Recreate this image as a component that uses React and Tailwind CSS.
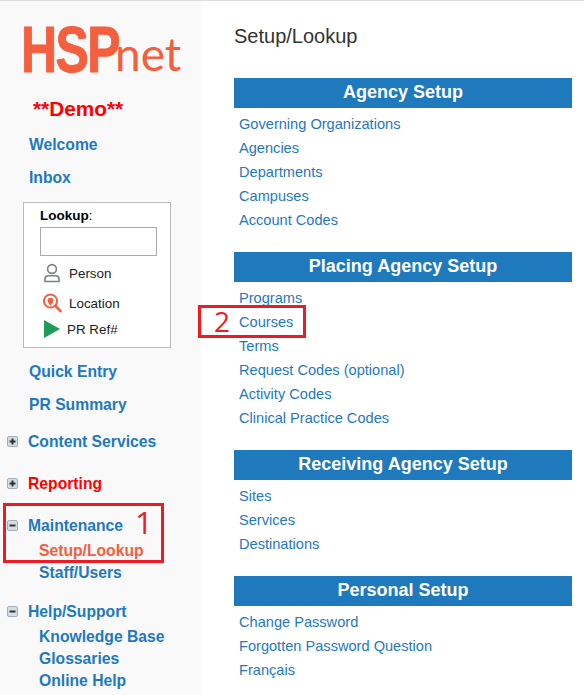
import React from "react";

const sections = [
  {
    title: "Agency Setup",
    links: ["Governing Organizations", "Agencies", "Departments", "Campuses", "Account Codes"],
  },
  {
    title: "Placing Agency Setup",
    links: ["Programs", "Courses", "Terms", "Request Codes (optional)", "Activity Codes", "Clinical Practice Codes"],
  },
  {
    title: "Receiving Agency Setup",
    links: ["Sites", "Services", "Destinations"],
  },
  {
    title: "Personal Setup",
    links: ["Change Password", "Forgotten Password Question", "Français"],
  },
];

const TreeIcon = ({ open }) => (
  <svg width="11" height="11" viewBox="0 0 11 11" className="shrink-0">
    <rect x="0.5" y="0.5" width="10" height="10" rx="1.5" fill="#d5dde2" stroke="#9fb0bb" />
    <rect x="2.5" y="4.5" width="6" height="2" fill="#333" />
    {!open && <rect x="4.5" y="2.5" width="2" height="6" fill="#333" />}
  </svg>
);

const NavLink = ({ children, className = "" }) => (
  <div className={`flex items-center pt-[2px] font-bold text-[#1f79bd] ${className}`}>{children}</div>
);

const TreeHead = ({ open, children, className = "" }) => (
  <div className={`flex h-[22px] items-center gap-[10px] pl-[7px] text-[15.7px] font-bold ${className}`}>
    <TreeIcon open={open} />
    <span className="pt-[2px]">{children}</span>
  </div>
);

const Sidebar = () => (
  <div className="relative w-[201px] shrink-0 bg-[#f9f9f9]">
    {/* logo */}
    <div className="flex h-[71px] items-end pl-[21px] text-[#f45f3f]">
      <span className="inline-block w-[94px] origin-left scale-x-[0.78] text-[64px] leading-[44px] font-bold tracking-[-2px] [-webkit-text-stroke:1px_#f45f3f] [font-family:'Liberation_Sans',sans-serif]">HSP</span>
      <span className="text-[46px] leading-[36px] [font-family:'Lato',sans-serif]">net</span>
    </div>
    <div className="mt-[23px] h-[28px] pl-[33px] text-[20.8px] leading-[28px] font-bold text-[#ff0000]">**Demo**</div>
    <NavLink className="mt-[10px] h-[22px] pl-[29px] text-[15.7px]">Welcome</NavLink>
    <NavLink className="mt-[11px] h-[22px] pl-[29px] text-[15.7px]">Inbox</NavLink>

    <div className="mx-[23px] mt-[14px] h-[146px] w-[148px] border border-[#bbbbbb] bg-white pl-[16px]">
      <div className="pt-[5px] text-[13.5px] leading-[16px] text-black">
        <span className="font-bold">Lookup</span>:
      </div>
      <div className="mt-[3px] h-[29px] w-[117px] border border-[#aaaaaa] bg-white"></div>
      <div className="mt-[5px] flex h-[24px] items-center gap-[8px] pl-[3px] text-[13.4px] text-[#222]">
        <svg width="18" height="20" viewBox="0 0 18 20" fill="none" stroke="#7b7f85" strokeWidth="1.6">
          <circle cx="9" cy="6" r="4.4" />
          <path d="M2 18.5v-2.5c0-2 1.6-3.2 3.5-3.2h7c1.9 0 3.5 1.2 3.5 3.2v2.5z" />
        </svg>
        <span className="pt-[2px]">Person</span>
      </div>
      <div className="mt-[6px] flex h-[24px] items-center gap-[7px] pl-[2px] text-[13.4px] text-[#222]">
        <svg width="20" height="20" viewBox="0 0 20 20" fill="none" stroke="#f4603f" strokeWidth="2">
          <circle cx="8.5" cy="8" r="6.6" />
          <path d="M13.5 13l5 5" strokeWidth="2.6" strokeLinecap="round" />
          <path d="M8.5 12c-1.6-2-2.4-3-2.4-4.2a2.4 2.4 0 0 1 4.8 0c0 1.2-.8 2.2-2.4 4.2z" strokeWidth="1.2" fill="#f4603f" />
        </svg>
        <span className="pt-[2px]">Location</span>
      </div>
      <div className="mt-[2px] flex h-[24px] items-center gap-[7px] pl-[4px] text-[13.4px] text-[#222]">
        <svg width="16" height="18" viewBox="0 0 16 18">
          <path d="M0 0l16 9-16 9z" fill="#1f9c5a" />
        </svg>
        <span className="pt-[2px]">PR Ref#</span>
      </div>
    </div>

    <NavLink className="mt-[12px] h-[22px] pl-[29px] text-[15.7px]">Quick Entry</NavLink>
    <NavLink className="mt-[11px] h-[22px] pl-[29px] text-[15.7px]">PR Summary</NavLink>
    <TreeHead className="mt-[15px] text-[#1f79bd]">Content Services</TreeHead>
    <TreeHead className="mt-[20px] text-[#ff0000]">Reporting</TreeHead>
    <TreeHead open className="mt-[20px] text-[#1f79bd]">Maintenance</TreeHead>
    <div className="mt-[3px] flex h-[22px] items-center pl-[39px] pt-[2px] text-[15.7px] font-bold text-[#f45f3f]">Setup/Lookup</div>
    <NavLink className="h-[22px] pl-[39px] text-[15.7px]">Staff/Users</NavLink>
    <TreeHead open className="mt-[17px] text-[#1f79bd]">Help/Support</TreeHead>
    <NavLink className="mt-[3px] h-[22px] pl-[39px] text-[15.7px]">Knowledge Base</NavLink>
    <NavLink className="h-[22px] pl-[39px] text-[15.7px]">Glossaries</NavLink>
    <NavLink className="h-[22px] pl-[39px] text-[15.7px]">Online Help</NavLink>

    {/* annotation 1 */}
    <div className="absolute left-[3px] top-[502px] h-[60px] w-[161px] border-[3px] border-[#ed1c24]"></div>
    <div className="absolute left-[135px] top-[503px] text-[31px] leading-[36px] text-[#ed1c24] [font-family:'Open_Sans',sans-serif]">1</div>
  </div>
);

const App = () => (
  <div className="h-[695px] w-[584px] overflow-hidden bg-white [font-family:'Liberation_Sans',Arial,sans-serif]">
    <div className="h-px bg-[#dcdcdc]"></div>
    <div className="flex h-[694px]">
      <Sidebar />
      <div className="relative flex-1 pl-[33px] pr-[12px]">
        <div className="h-[77px] pt-[22px] text-[20px] leading-[26px] text-[#333333]">Setup/Lookup</div>
        {sections.map((s) => (
          <div key={s.title} className="mb-[20px]">
            <div className="flex h-[30px] items-center justify-center bg-[#1f79bd] pb-[2px] text-[18px] font-bold text-white">{s.title}</div>
            <div className="mt-[4px] pl-[5px]">
              {s.links.map((l) => (
                <div key={l} className="flex h-[24px] items-center pt-[2px] text-[14.6px] text-[#1f79bd]">{l}</div>
              ))}
            </div>
          </div>
        ))}
        {/* annotation 2 */}
        <div className="absolute left-[-3px] top-[304px] h-[33px] w-[108px] border-[3px] border-[#ed1c24]"></div>
        <div className="absolute left-[13px] top-[302px] text-[28px] leading-[36px] text-[#ed1c24] [font-family:'Open_Sans',sans-serif]">2</div>
      </div>
    </div>
  </div>
);

export default App;
